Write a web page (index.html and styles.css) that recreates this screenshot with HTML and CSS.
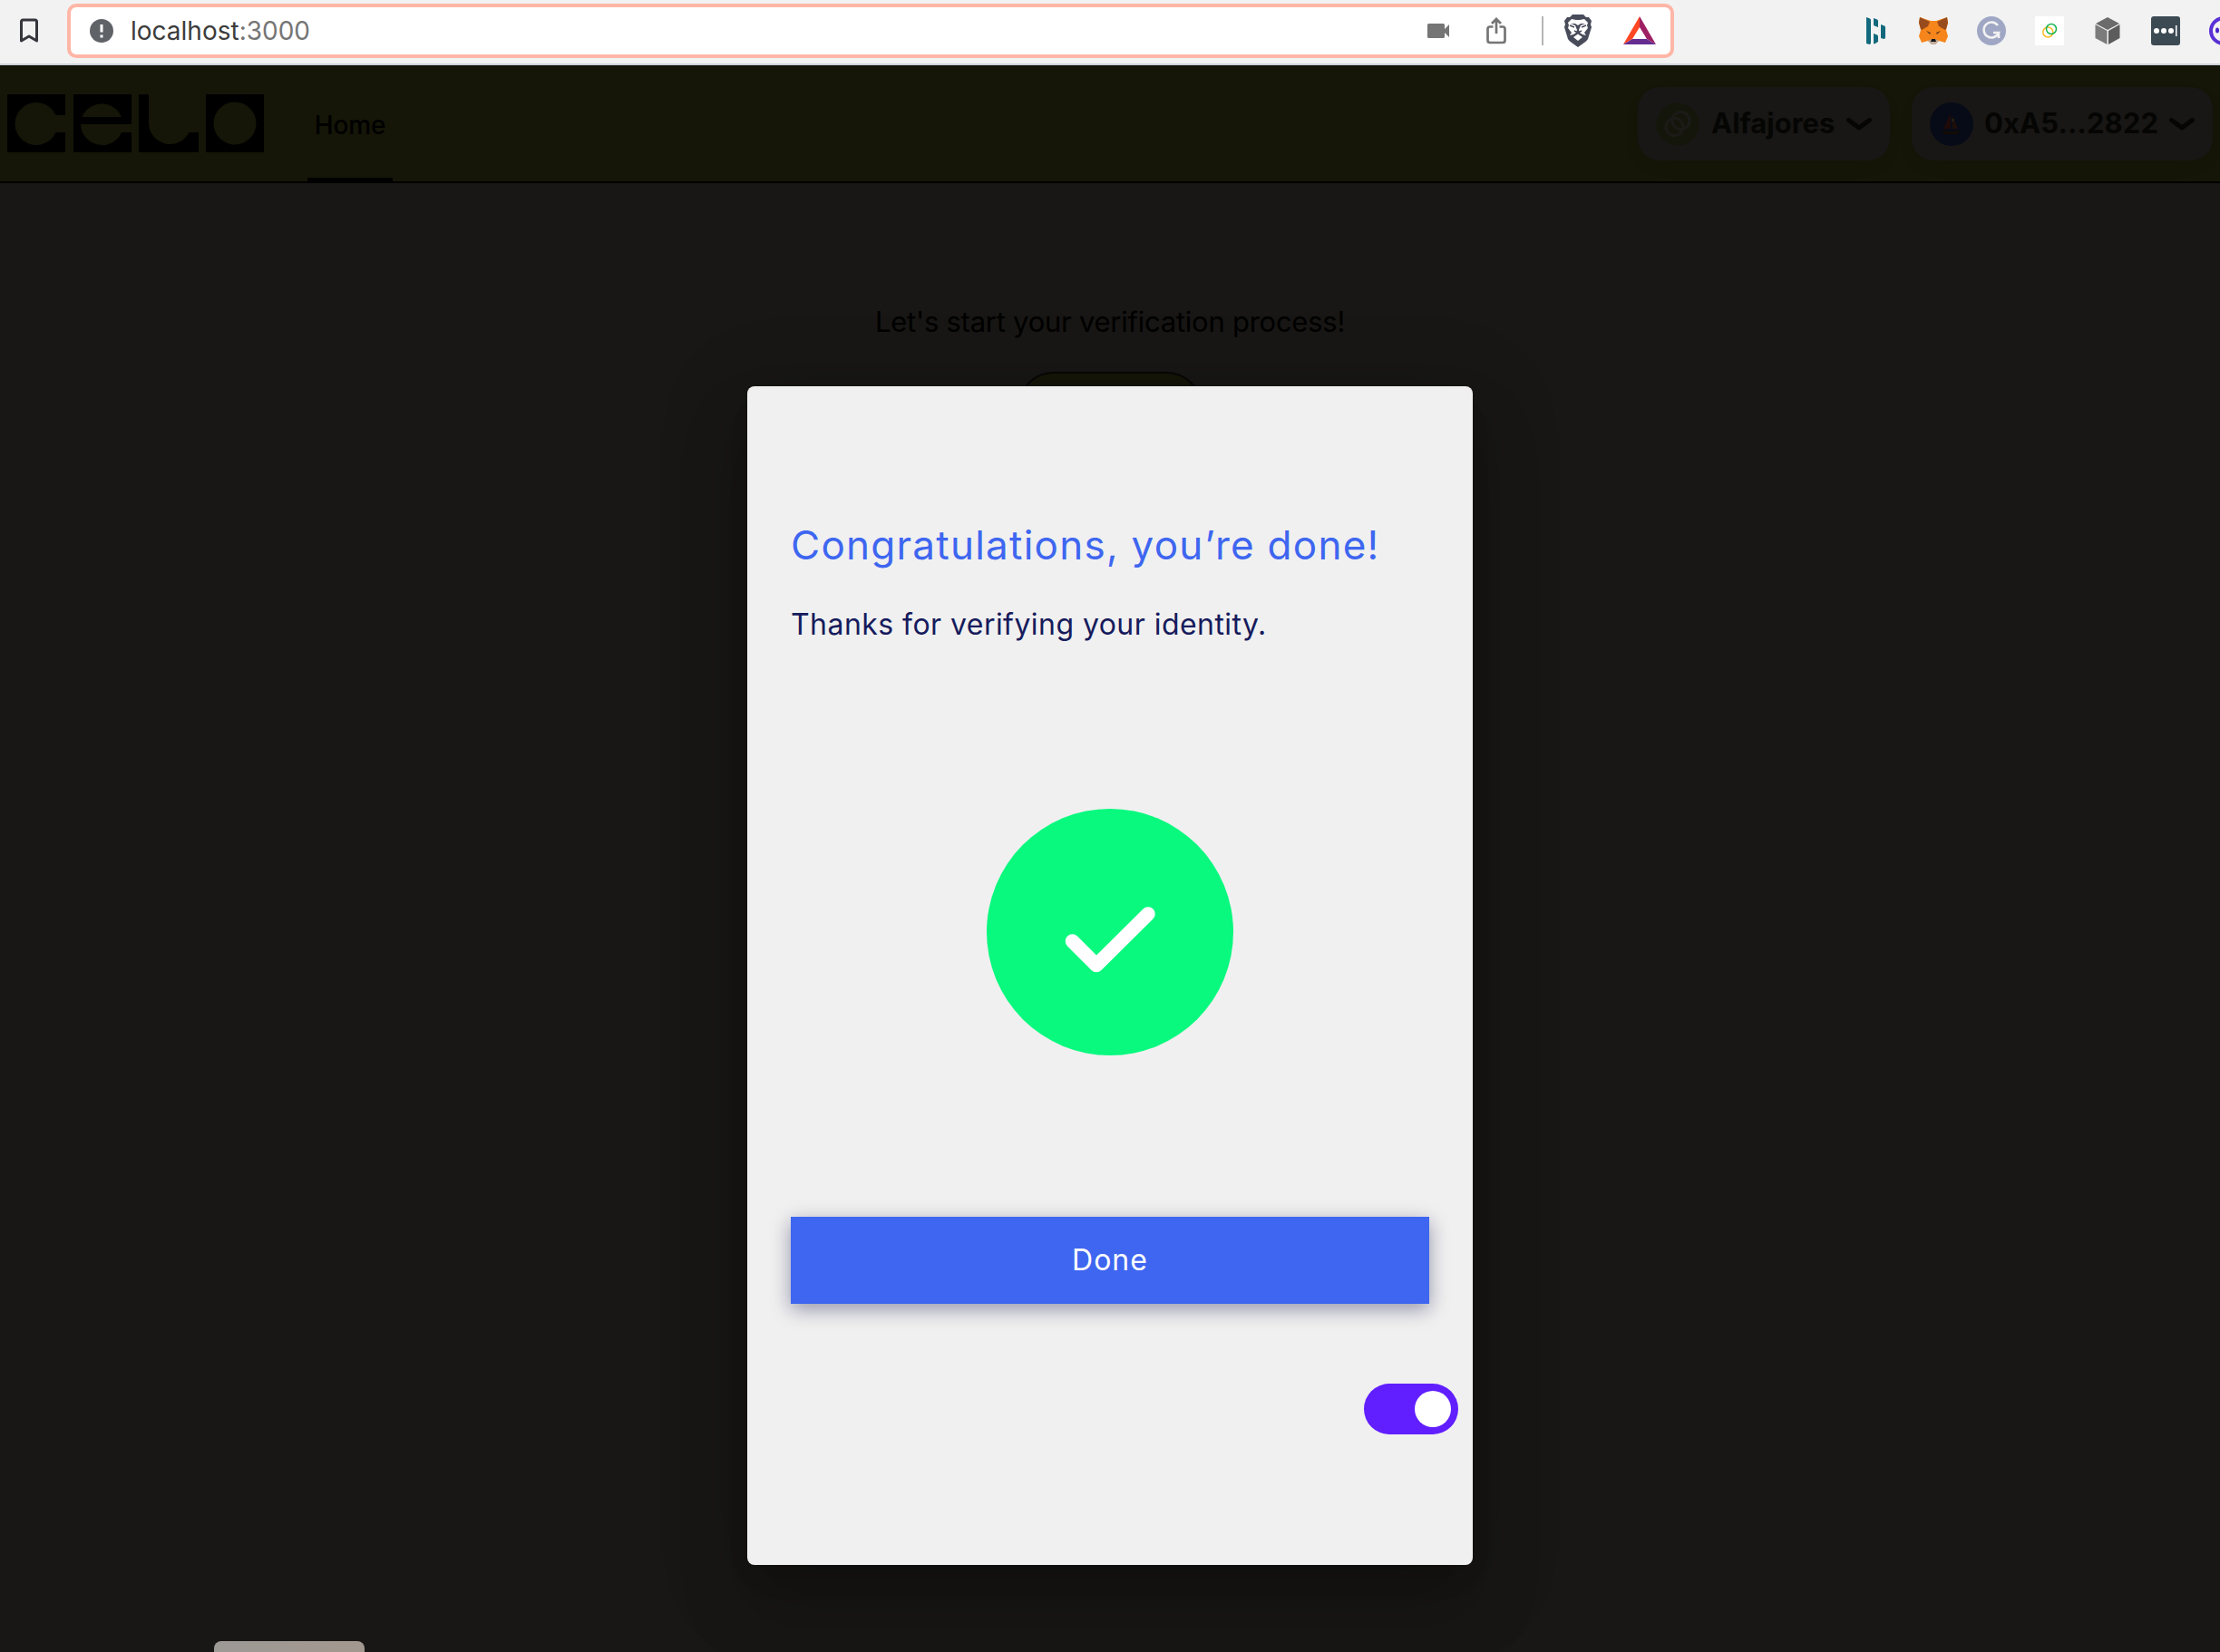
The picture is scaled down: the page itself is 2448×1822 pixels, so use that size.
FILE: index.html
```html
<!DOCTYPE html>
<html lang="en">
<head>
<meta charset="utf-8">
<title>Celo</title>
<link rel="stylesheet" href="styles.css">
</head>
<body>
<div class="toolbar">
  <svg class="bookmark" width="22" height="28" viewBox="0 0 22 28"><path d="M2.500 25V4Q2.500 2 4.500 2H17.500Q19.500 2 19.500 4V25L11 20Z" fill="none" stroke="#36373d" stroke-width="3" stroke-linejoin="round"/></svg>
  <div class="address">
    <svg class="info" width="26" height="26" viewBox="0 0 26 26"><circle cx="13" cy="13" r="13" fill="#5f6368"/><path d="M13 6v8.500M13 17.500v3" stroke="#fff" stroke-width="3"/></svg>
    <span class="url">localhost<span class="port">:3000</span></span>
    <svg class="camera" width="24" height="16" viewBox="0 0 24 16"><path d="M1.500 0H17.500Q19 0 19 1.500V6L24 1V15L19 10V14.500Q19 16 17.500 16H1.500Q0 16 0 14.500V1.500Q0 0 1.500 0Z" fill="#757575"/></svg>
    <svg class="share" width="22" height="30" viewBox="0 0 22 30"><path d="M7.500 10.500H4Q1.500 10.500 1.500 13V25.500Q1.500 28 4 28H18Q20.500 28 20.500 25.500V13Q20.500 10.500 18 10.500H14.500M11 18V2M6 7L11 2L16 7" fill="none" stroke="#757575" stroke-width="2.700"/></svg>
    <span class="divider"></span>
    <svg class="brave" width="32" height="36" viewBox="0 0 32 36"><path d="M10 0H22L25 3L28 3L31 7L30 11L31 14L27 27Q26 29 23 31L16 36L9 31Q6 29 5 27L1 14L2 11L1 7L4 3L7 3Z" fill="#484b5a"/><path d="M9 5L14 6H18L23 5L27 9L26 12L27 15L23 20L25 23L21 22L18 20L17 17L19 12L24 10L19 10L16 12L13 10L8 10L13 12L15 17L14 20L11 22L7 23L9 20L5 15L6 12L5 9Z" fill="#fff"/><path d="M7 12L12 14M25 12L20 14M12 18L16 20L20 18M16 20V22" stroke="#484b5a" stroke-width="1.500" fill="none"/><path d="M11 25L16 21.500L21 25L16 29Z" fill="#fff"/></svg>
    <svg class="bat" width="36" height="32" viewBox="0 0 36 32"><path d="M18 0V12L10 25L0 31Z" fill="#ff4724"/><path d="M18 0L36 31L26 25L18 12Z" fill="#9e1f63"/><path d="M0 31L10 25H26L36 31Z" fill="#662d91"/></svg>
  </div>
  <div class="extensions">
    <svg width="32" height="32" viewBox="0 0 32 32"><path d="M6 1L10 2.500Q11 3 11 4V29Q11 31 9.500 31L6 30Z M14 2L18 3.500Q19 4 19 5V12L15 10.500Q14 10 14 9Z M14 19L18 20.500Q19 21 19 22V28L15 30.500L14 30Z M22 9L26 10.500Q27 11 27 12V23Q27 25 25.500 25L22 24Z" fill="#12697c"/></svg>
    <svg width="32" height="32" viewBox="0 0 32 32"><path d="M1 1L13 5H19L31 1L32 7L30 15L32 22L29 29L22 27L18 31H14L10 27L3 29L0 22L2 15L0 7Z" fill="#f6851b"/><path d="M1 1L12 6L10 11L3 15L2 14L0 7ZM31 1L20 6L22 11L29 15L30 14L32 7Z" fill="#984c1e"/><path d="M8 16L13 18L12 20ZM24 16L19 18L20 20Z" fill="#663c20"/><path d="M10 27L14 25H18L22 27L18 31H14Z" fill="#c0ad9e"/><path d="M14 25H18L19 28H13Z" fill="#161616"/></svg>
    <svg width="32" height="32" viewBox="0 0 32 32"><circle cx="16" cy="16" r="16" fill="#9fa7c4"/><path d="M23 10A8.500 8.500 0 1 0 24 18H18M24 17V24" fill="none" stroke="#f2f2f2" stroke-width="2.500"/></svg>
    <svg width="32" height="32" viewBox="0 0 32 32"><path d="M0 0H32V32H0Z" fill="#fff"/><circle cx="14.300" cy="17.500" r="5.500" fill="none" stroke="#fbb929" stroke-width="1.500"/><circle cx="18" cy="14" r="5.500" fill="none" stroke="#18b552" stroke-width="1.500"/></svg>
    <svg width="32" height="32" viewBox="0 0 32 32"><path d="M16 1L29 8L16 15L3 8Z" fill="#6b6b6b"/><path d="M2.500 9L15.500 16V31L2.500 24Z" fill="#7b7b7b"/><path d="M29.500 9L17 16V31L29.500 24Z" fill="#5c5c5c"/></svg>
    <svg width="32" height="32" viewBox="0 0 32 32"><rect width="32" height="32" rx="3" fill="#3c4a54"/><g fill="#fff"><circle cx="6" cy="16" r="3"/><circle cx="14" cy="16" r="3"/><circle cx="22" cy="16" r="3"/><path d="M27 10h1.500v12H27z"/></g></svg>
    <svg width="32" height="32" viewBox="0 0 32 32"><circle cx="16" cy="16" r="14" fill="#f2f2f2" stroke="#5a31d6" stroke-width="4"/><ellipse cx="9" cy="15.500" rx="2" ry="3" fill="#4a22c9"/></svg>
  </div>
</div>
<header class="header">
  <svg class="logo" width="284" height="64" viewBox="0 0 284 64"><path fill-rule="evenodd" d="M0 0H64V23H53.500A23.500 23.500 0 1 0 53.500 42H64V64H0Z"/><path fill-rule="evenodd" d="M73 0H137V33H81A23.500 23.500 0 0 0 126 42H137V64H73ZM82.500 25A23.500 23.500 0 0 1 126 25Z"/><path d="M145 0H156V32A23.500 23.500 0 0 0 200.500 42H211V64H145Z"/><path fill-rule="evenodd" d="M219 0H283V64H219ZM251 8.500A23.500 23.500 0 1 0 251 55.500A23.500 23.500 0 1 0 251 8.500Z"/></svg>
  <nav class="nav"><a class="nav-link">Home</a></nav>
  <div class="wallet">
    <div class="pill">
      <svg width="48" height="48" viewBox="0 0 48 48"><circle cx="24" cy="24" r="23.500" fill="#15160b"/><g fill="none" stroke="#1c1b18" stroke-width="3"><circle cx="20.500" cy="27" r="9.500"/><circle cx="27.500" cy="20" r="9.500"/></g></svg>
      <span class="network">Alfajores</span>
      <svg class="chevron" width="28" height="14" viewBox="0 0 28 14"><path d="M2.500 2.500L14 11L25.500 2.500" /></svg>
    </div>
    <div class="pill">
      <svg width="48" height="48" viewBox="0 0 48 48"><circle cx="24" cy="24" r="24" fill="#070b17"/><path d="M23 12L15 29H23Z" fill="#200a09"/><path d="M25 15L31 29H25Z" fill="#200e0a"/><path d="M24 18h3v3h-3z" fill="#231f12"/><path d="M13 31Q24 33 34 31L31 35H16Z" fill="#120c06"/></svg>
      <span class="account">0xA5...2822</span>
      <svg class="chevron" width="28" height="14" viewBox="0 0 28 14"><path d="M2.500 2.500L14 11L25.500 2.500" /></svg>
    </div>
  </div>
</header>
<main class="page">
  <p class="prompt">Let's start your verification process!</p>
  <div class="verify"></div>
</main>
<div class="overlay">
  <section class="dialog">
    <h1 class="title">Congratulations, you’re done!</h1>
    <p class="message">Thanks for verifying your identity.</p>
    <svg class="success" width="272" height="272" viewBox="0 0 272 272"><circle cx="136" cy="136" r="136" fill="#09f97e"/><path d="M94.500 146L121 172.500L178 116" fill="none" stroke="#fff" stroke-width="15.500" stroke-linecap="round" stroke-linejoin="round"/></svg>
    <button class="done">Done</button>
    <div class="toggle"><span class="knob"></span></div>
  </section>
</div>
<div class="bottom-tab"></div>
</body>
</html>
```
FILE: styles.css
```css
* { box-sizing: border-box; }
body { margin: 0; height: 1822px; overflow: hidden; display: flex; flex-direction: column; background: #181715; font-family: Inter, "Liberation Sans", sans-serif; }
svg { display: block; flex: none; }

.toolbar { flex: none; height: 72px; display: flex; align-items: flex-start; background: #f2f2f2; border-bottom: 2px solid #ced3dc; overflow: hidden; }
.bookmark { margin: 20px 0 0 21px; }
.address { flex: none; width: 1772px; height: 60px; margin: 4px 0 0 31px; padding: 0 16px 0 21px; display: flex; align-items: center; background: #fff; border: 4px solid #ffb6a7; border-radius: 10px; }
.url { margin-left: 19px; font-size: 28px; color: #3c3c3c; }
.port { color: #757575; }
.camera { margin-left: auto; }
.share { margin-left: 41px; }
.divider { width: 2px; height: 32px; margin: 0 22px 0 39px; background: #b5b5b5; }
.bat { margin-left: 34px; }
.extensions { display: flex; gap: 32px; margin: 18px 0 0 206px; }

.header { flex: none; height: 130px; display: flex; background: #151608; border-bottom: 2px solid #000; }
.logo { margin: 32px 0 0 8px; }
.nav { display: flex; margin-left: 47px; }
.nav-link { width: 94px; display: flex; align-items: center; justify-content: center; padding-top: 7px; border-bottom: 4px solid #000; font-size: 28px; font-weight: 500; letter-spacing: -0.2px; color: #000; }
.wallet { display: flex; gap: 24px; margin: 24px 8px 0 auto; }
.pill { height: 81px; display: flex; align-items: center; padding: 0 20px; border-radius: 24px; background: #181715; box-shadow: 0 8px 16px rgba(0,0,0,.06); font-size: 31px; font-weight: 700; color: #050504; }
.network { width: 136px; margin-left: 13px; padding-bottom: 2px; white-space: nowrap; }
.account { width: 191px; margin-left: 12px; padding-bottom: 2px; letter-spacing: 0.1px; white-space: nowrap; }
.chevron { margin-left: 13px; fill: none; stroke: #050504; stroke-width: 5; stroke-linecap: round; stroke-linejoin: round; }

.page { flex: 1; display: flex; flex-direction: column; align-items: center; }
.prompt { margin: 132px 0 0; font-size: 31px; line-height: 42px; letter-spacing: -0.25px; color: #000; white-space: nowrap; }
.verify { width: 204px; height: 80px; margin-top: 34px; border: 2px solid #080808; border-radius: 40px; background: #151608; }

.overlay { position: absolute; inset: 0; display: flex; justify-content: center; align-items: flex-start; padding-top: 426px; overflow: hidden; }
.dialog { width: 800px; height: 1300px; padding: 145px 48px 0; border-radius: 8px; background: #f0f0f0; box-shadow: 0 22px 30px -14px rgba(0,0,0,.2), 0 48px 76px 6px rgba(0,0,0,.14), 0 18px 92px 16px rgba(0,0,0,.12); display: flex; flex-direction: column; }
.title { margin: 0; font-size: 44px; line-height: 60px; font-weight: 400; letter-spacing: 1.25px; color: #3e66f0; white-space: nowrap; }
.message { margin: 34px 0 0; font-size: 32px; line-height: 48px; letter-spacing: 0.45px; color: #161b5c; white-space: nowrap; }
.success { margin: 179px 0 0 216px; }
.done { flex: none; height: 96px; margin-top: 178px; padding: 0 0 2px; border: 0; background: #3e66f0; box-shadow: 0 6px 20px rgba(10,10,70,.4); font: 400 32px Inter, sans-serif; letter-spacing: 1px; color: #fff; }
.toggle { align-self: flex-end; flex: none; width: 104px; height: 56px; margin: 88px -32px 0 0; padding: 8px; border-radius: 28px; background: #611fff; display: flex; justify-content: flex-end; }
.knob { width: 40px; height: 40px; border-radius: 50%; background: #fff; }
.bottom-tab { position: absolute; left: 236px; top: 1810px; width: 166px; height: 12px; border-radius: 8px 8px 0 0; background: linear-gradient(90deg, #9d9995, #a3988f); }
```
